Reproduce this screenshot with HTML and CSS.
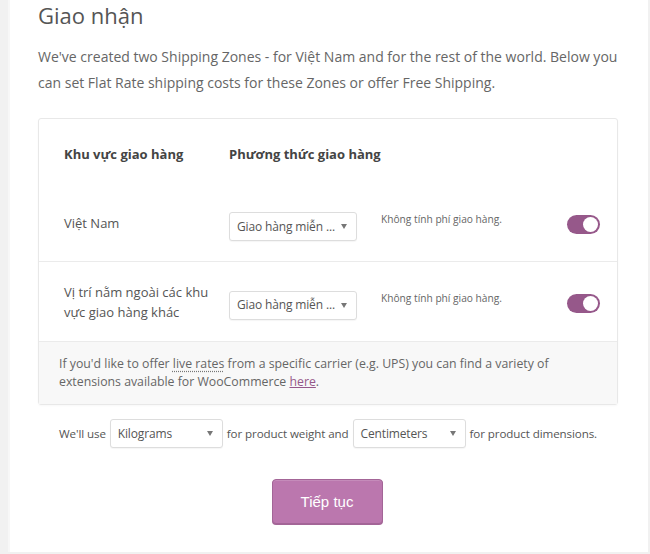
FILE: index.html
```html
<!DOCTYPE html>
<html lang="vi">
<head>
<meta charset="utf-8">
<link rel="stylesheet" href="styles.css">
</head>
<body>
<div class="card">
  <h1 class="title">Giao nhận</h1>
  <p class="intro">We've created two Shipping Zones - for Việt Nam and for the rest of the world. Below you can set Flat Rate shipping costs for these Zones or offer Free Shipping.</p>
  <div class="zones">
    <div class="row head">
      <div class="col-zone">Khu vực giao hàng</div>
      <div class="col-method">Phương thức giao hàng</div>
    </div>
    <div class="row first">
      <div class="col-zone">Việt Nam</div>
      <div class="select method-select"><span>Giao hàng miễn ...</span><i class="caret"></i></div>
      <div class="desc">Không tính phí giao hàng.</div>
      <div class="toggle"><span class="knob"></span></div>
    </div>
    <div class="row second">
      <div class="col-zone">Vị trí nằm ngoài các khu vực giao hàng khác</div>
      <div class="select method-select"><span>Giao hàng miễn ...</span><i class="caret"></i></div>
      <div class="desc">Không tính phí giao hàng.</div>
      <div class="toggle"><span class="knob"></span></div>
    </div>
    <div class="note">If you'd like to offer <span class="dotted">live rates</span> from a specific carrier (e.g. UPS) you can find a variety of extensions available for WooCommerce <a class="link" href="#">here</a>.</div>
  </div>
  <div class="units">
    <span>We'll use</span>
    <div class="select unit-select"><span>Kilograms</span><i class="caret"></i></div>
    <span>for product weight and</span>
    <div class="select unit-select"><span>Centimeters</span><i class="caret"></i></div>
    <span>for product dimensions.</span>
  </div>
  <div class="actions">
    <button class="btn">Tiếp tục</button>
  </div>
</div>
</body>
</html>
```

FILE: styles.css
```css
html, body {
  margin: 0;
  padding: 0;
}
body {
  background: #f1f1f1;
  font-family: "Open Sans", "Noto Sans", sans-serif;
  color: #666;
  width: 650px;
  height: 554px;
  overflow: hidden;
}
.card {
  margin-left: 8px;
  width: 640px;
  height: 552px;
  box-sizing: border-box;
  background: #fff;
  border-left: 2px solid #f7f7f7;
  padding: 0 30px 0 28px;
}
.title {
  margin: 0;
  font-size: 22px;
  line-height: 30px;
  font-weight: 400;
  color: #555;
}
.intro {
  margin: 14px 0 0;
  font-size: 14px;
  line-height: 26px;
  color: #666;
}
.zones {
  margin-top: 22px;
  border: 1px solid #e8e8e8;
  border-radius: 3px;
  box-shadow: 0 1px 2px rgba(0,0,0,0.03);
}
.row {
  display: grid;
  grid-template-columns: 165px 152px 1fr auto;
  align-items: center;
  padding: 21px 17px 20px 25px;
  font-size: 13px;
  line-height: 20px;
  color: #555;
}
.row.head {
  padding: 25px 17px 21px 25px;
  font-weight: 700;
  color: #444;
}
.row.first .col-zone {
  margin-top: -2px;
}
.row.second {
  border-top: 1px solid #ebebeb;
  padding-top: 20px;
  padding-bottom: 19px;
}
.row .col-zone {
  padding-right: 10px;
}
.select {
  display: flex;
  align-items: center;
  justify-content: space-between;
  box-sizing: border-box;
  height: 29px;
  border: 1px solid #ddd;
  border-radius: 3px;
  background: #fff;
  padding: 0 9px 0 7px;
  font-size: 12px;
  letter-spacing: -0.15px;
  color: #555;
  box-shadow: 0 1px 1px rgba(0,0,0,0.04);
}
.method-select {
  width: 128px;
  margin-top: 6px;
}
.caret {
  width: 0;
  height: 0;
  border-left: 3.5px solid transparent;
  border-right: 3.5px solid transparent;
  border-top: 5px solid #777;
}
.desc {
  font-size: 10.2px;
  color: #666;
  margin-top: -9px;
}
.toggle {
  width: 33px;
  height: 19px;
  border-radius: 10px;
  background: #96588a;
  position: relative;
  margin-top: 2px;
}
.knob {
  position: absolute;
  right: 2px;
  top: 2px;
  width: 15px;
  height: 15px;
  border-radius: 50%;
  background: #fff;
}
.note {
  background: #f8f8f8;
  border-top: 1px solid #ebebeb;
  padding: 13px 20px 13px 20px;
  font-size: 12.3px;
  line-height: 18px;
  color: #666;
}
.dotted {
  text-decoration: underline dotted #777;
  text-underline-offset: 3px;
}
.link {
  color: #96588a;
  text-decoration: underline;
}
.units {
  margin-top: 14px;
  display: flex;
  justify-content: center;
  align-items: center;
  gap: 4px;
  font-size: 11.6px;
  letter-spacing: -0.1px;
  color: #555;
}
.unit-select {
  width: 113px;
  height: 29px;
}
.actions {
  margin-top: 31px;
  display: flex;
  justify-content: center;
}
.btn {
  width: 111px;
  height: 45px;
  background: #bb77ae;
  border: 1px solid #a36597;
  border-radius: 4px;
  color: #fff;
  font-family: "Liberation Sans", Arial, sans-serif;
  font-size: 15px;
  box-shadow: inset 0 1px 0 rgba(255,255,255,0.15), 0 1px 0 #a36597;
  margin-left: -2px;
}
```
